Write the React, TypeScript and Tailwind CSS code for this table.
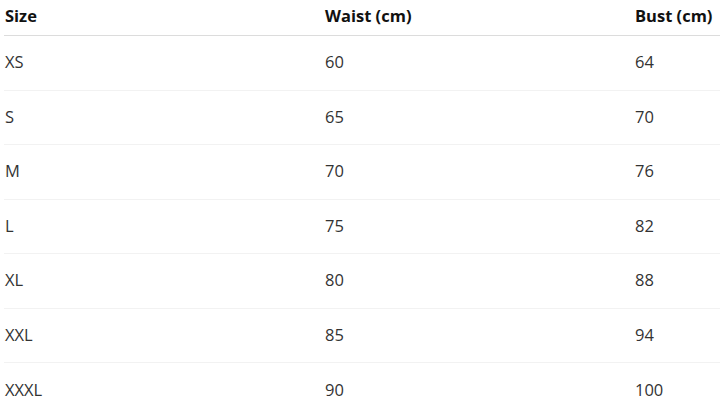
const rows = [
  { size: 'XS', waist: 60, bust: 64 },
  { size: 'S', waist: 65, bust: 70 },
  { size: 'M', waist: 70, bust: 76 },
  { size: 'L', waist: 75, bust: 82 },
  { size: 'XL', waist: 80, bust: 88 },
  { size: 'XXL', waist: 85, bust: 94 },
  { size: 'XXXL', waist: 90, bust: 100 },
];

export default function App() {
  return (
    <div className="min-h-screen bg-white pl-[4px] font-['Open_Sans','Noto_Sans',sans-serif]">
      {/* Header */}
      <div className="grid h-[36px] grid-cols-[321px_310px_1fr] items-center border-b border-[#dcdcdc] pb-[2px] text-[16.5px] font-bold text-[#111]">
        <div className="pl-[1px]">Size</div>
        <div>Waist (cm)</div>
        <div>Bust (cm)</div>
      </div>

      {/* Rows */}
      {rows.map((row, i) => (
        <div
          key={row.size}
          className={
            'grid h-[54.5px] grid-cols-[321px_310px_1fr] items-center text-[16.5px] text-[#333] ' +
            (i < rows.length - 1 ? 'border-b border-[#f2f2f2]' : '')
          }
        >
          <div className="pl-[1px]">{row.size}</div>
          <div>{row.waist}</div>
          <div>{row.bust}</div>
        </div>
      ))}
    </div>
  );
}
